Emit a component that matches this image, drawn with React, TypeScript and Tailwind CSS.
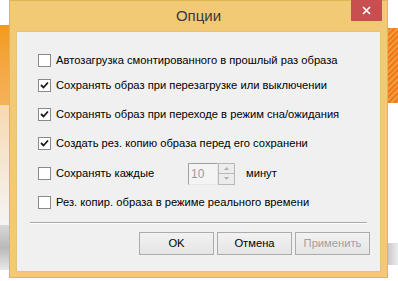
import React from "react";

const Check = ({ checked }: { checked: boolean }) => (
  <div className="w-[13px] h-[13px] border border-[#8a8a8a] bg-white flex items-center justify-center shrink-0">
    {checked && (
      <svg width="9" height="9" viewBox="0 0 9 9">
        <path d="M1 4 L3.5 6.5 L8 1.5" stroke="#1a1a1a" strokeWidth="1.8" fill="none" />
      </svg>
    )}
  </div>
);

const Row = ({ checked, label, mt }: { checked: boolean; label: string; mt: string }) => (
  <div className={`flex items-center h-[13px] ${mt}`}>
    <Check checked={checked} />
    <span className="ml-[5px] whitespace-nowrap">{label}</span>
  </div>
);

const Btn = ({ label, disabled }: { label: string; disabled?: boolean }) => (
  <div
    className={`w-[75px] h-[23px] border border-[#acacac] bg-gradient-to-b from-[#f2f2f2] to-[#e5e5e5] flex items-center justify-center ${
      disabled ? "text-[#a0a0a0]" : "text-black"
    }`}
  >
    {label}
  </div>
);

export default function App() {
  return (
    <div
      className="relative w-[398px] h-[281px] bg-white overflow-hidden"
      style={{ fontFamily: '"Liberation Sans", Arial, sans-serif' }}
    >
      {/* desktop background */}
      <div className="absolute left-0 top-[25px] w-[10px] h-[80px] bg-gradient-to-b from-[#f39a1c] to-[#f5b35a]" />
      <div className="absolute left-0 top-[105px] w-[10px] h-[120px] bg-gradient-to-b from-[#f7d9b0] to-[#f4f4f4]" />
      <div className="absolute left-0 top-[225px] w-[10px] h-[45px] bg-gradient-to-b from-[#d8d8d8] via-[#b9b9b9] to-[#e8e8e8]" />
      <div className="absolute right-0 top-[28px] w-[10px] h-[75px] bg-[repeating-linear-gradient(135deg,#f07a1a_0px,#f07a1a_2px,#f59a3a_2px,#f59a3a_4px)]" />
      <div className="absolute right-0 top-[243px] w-[10px] h-[22px] bg-gradient-to-r from-[#c9c9c9] to-[#ececec]" />

      {/* window */}
      <div className="relative ml-[9px] w-[379px] h-[278px] bg-[#f2c974] border border-[#e2b458] flex flex-col">
        <div className="relative h-[30px] flex items-center justify-center">
          <span className="text-[15px] text-[#3a3a3a] mt-[1px]">Опции</span>
          <div className="absolute right-[5px] top-[-1px] w-[31px] h-[21px] bg-[#c74f4f] flex items-center justify-center">
            <svg width="9" height="9" viewBox="0 0 9 9">
              <path d="M1 1 L8 8 M8 1 L1 8" stroke="white" strokeWidth="1.6" />
            </svg>
          </div>
        </div>
        <div className="mx-[6px] flex-1 mb-[5px] bg-[#f0f0f0] border border-[#e6c27a] flex flex-col text-[11.2px] text-black">
          <div className="ml-[21px] mt-[22px] flex flex-col">
            <Row checked={false} label="Автозагрузка смонтированного в прошлый раз образа" mt="" />
            <Row checked={true} label="Сохранять образ при перезагрузке или выключении" mt="mt-[12px]" />
            <Row checked={true} label="Сохранять образ при переходе в режим сна/ожидания" mt="mt-[16px]" />
            <Row checked={true} label="Создать рез. копию образа перед его сохранени" mt="mt-[16px]" />
            <div className="flex items-center h-[13px] mt-[17px]">
              <Check checked={false} />
              <span className="ml-[5px] w-[132px] whitespace-nowrap">Сохранять каждые</span>
              <div className="flex h-[22px]">
                <div className="w-[30px] h-[22px] border-t border-l border-[#a0a0a0] border-r border-r-[#e8e8e8] border-b border-b-[#e8e8e8] bg-[#f4f4f4] text-[#9a9a9a] text-[12px] pl-[2px] leading-[20px]">
                  10
                </div>
                <div className="flex flex-col w-[17px] h-[22px]">
                  <div className="h-[11px] border border-[#b8b8b8] bg-[#ececec] flex items-center justify-center">
                    <svg width="5" height="3" viewBox="0 0 5 3"><path d="M0 3 L2.5 0 L5 3Z" fill="#b0b0b0" /></svg>
                  </div>
                  <div className="h-[11px] border border-t-0 border-[#b8b8b8] bg-[#ececec] flex items-center justify-center">
                    <svg width="5" height="3" viewBox="0 0 5 3"><path d="M0 0 L2.5 3 L5 0Z" fill="#b0b0b0" /></svg>
                  </div>
                </div>
              </div>
              <span className="ml-[11px]">минут</span>
            </div>
            <Row checked={false} label="Рез. копир. образа в режиме реального времени" mt="mt-[16px]" />
          </div>
          <div className="mx-[13px] mt-[13px] h-[2px] border-t border-[#a8a8a8] border-b border-b-white" />
          <div className="flex justify-end gap-[3px] mr-[10px] mt-[8px]">
            <Btn label="OK" />
            <Btn label="Отмена" />
            <Btn label="Применить" disabled />
          </div>
        </div>
      </div>
    </div>
  );
}
